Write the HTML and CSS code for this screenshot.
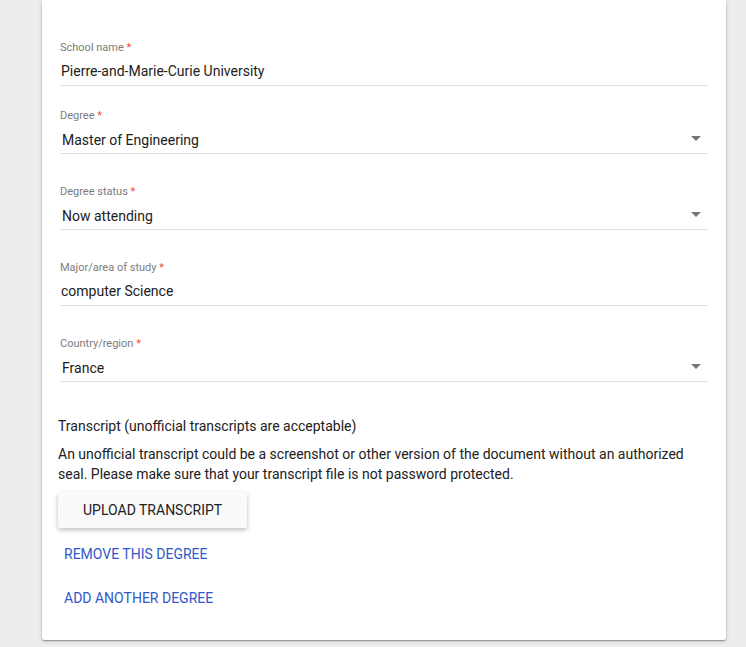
FILE: index.html
```html
<!DOCTYPE html>
<html lang="en">
<head>
<meta charset="utf-8">
<meta name="viewport" content="width=device-width, initial-scale=1">
<title>Education</title>
<link rel="stylesheet" href="styles.css">
</head>
<body>
<main class="card">
  <form class="form">
    <div class="fields">
      <div class="field field-compact">
        <label class="label" for="school">School name <span class="required">*</span></label>
        <input class="control" id="school" type="text" value="Pierre-and-Marie-Curie University" required>
      </div>
      <div class="field">
        <label class="label" for="degree">Degree <span class="required">*</span></label>
        <div class="select">
          <select class="control" id="degree" required><option>Master of Engineering</option></select>
        </div>
      </div>
      <div class="field">
        <label class="label" for="status">Degree status <span class="required">*</span></label>
        <div class="select">
          <select class="control" id="status" required><option>Now attending</option></select>
        </div>
      </div>
      <div class="field">
        <label class="label" for="major">Major/area of study <span class="required">*</span></label>
        <input class="control" id="major" type="text" value="computer Science" required>
      </div>
      <div class="field">
        <label class="label" for="country">Country/region <span class="required">*</span></label>
        <div class="select">
          <select class="control" id="country" required><option>France</option></select>
        </div>
      </div>
    </div>
    <section class="transcript">
      <p class="heading">Transcript (unofficial transcripts are acceptable)</p>
      <p class="hint">An unofficial transcript could be a screenshot or other version of the document without an authorized seal. Please make sure that your transcript file is not password protected.</p>
      <button class="button button-raised" type="button">Upload transcript</button>
    </section>
    <div class="actions">
      <button class="button button-flat" type="button">Remove this degree</button>
      <button class="button button-flat" type="button">Add another degree</button>
    </div>
  </form>
</main>
</body>
</html>
```
FILE: styles.css
```css
* {
  box-sizing: border-box;
}

body {
  min-height: 100vh;
  margin: 0;
  padding-bottom: 7px;
  background: #ededed;
  color: #212121;
  font: 14px/20px Roboto, "Liberation Sans", sans-serif;
}

p {
  margin: 0;
}

.card {
  margin: 0 20px 0 42px;
  padding: 40px 16px 24px;
  background: #fff;
  border-radius: 0 0 2px 2px;
  box-shadow: 0 1px 4px rgba(0, 0, 0, 0.2), 0 1px 1px rgba(0, 0, 0, 0.3);
}

.fields {
  padding: 0 2px;
}

.field {
  margin-bottom: 30px;
}

.field-compact {
  margin-bottom: 22px;
}

.label {
  display: block;
  font-size: 11px;
  line-height: 16px;
  color: #7c7c7c;
}

.required {
  color: #f9483b;
}

.control {
  display: block;
  width: 100%;
  height: 30px;
  margin: 0;
  padding: 1px 1px 0;
  border: 0;
  border-bottom: 1px solid #dfdfdf;
  border-radius: 0;
  outline: 0;
  background: transparent;
  color: #212121;
  font: inherit;
  appearance: none;
}

.select {
  position: relative;
}

.select .control {
  padding: 3px 24px 0 2px;
}

.select::after {
  content: "";
  position: absolute;
  top: 12px;
  right: 7px;
  border: 5px solid transparent;
  border-top-color: #757575;
  border-bottom: 0;
  pointer-events: none;
}

.transcript {
  margin-top: 34px;
}

.heading {
  margin-bottom: 8px;
}

.hint {
  margin-bottom: 8px;
}

.button {
  display: block;
  height: 36px;
  margin: 0;
  border: 0;
  border-radius: 2px;
  background: transparent;
  font: inherit;
  text-transform: uppercase;
  cursor: pointer;
}

.button-raised {
  padding: 0 25px;
  background: #fafafa;
  color: #212121;
  box-shadow: 0 2px 5px rgba(0, 0, 0, 0.26);
}

.actions {
  display: grid;
  justify-items: start;
  gap: 8px;
  margin-top: 8px;
}

.button-flat {
  padding: 0 6px;
  color: #3059c9;
}
```
